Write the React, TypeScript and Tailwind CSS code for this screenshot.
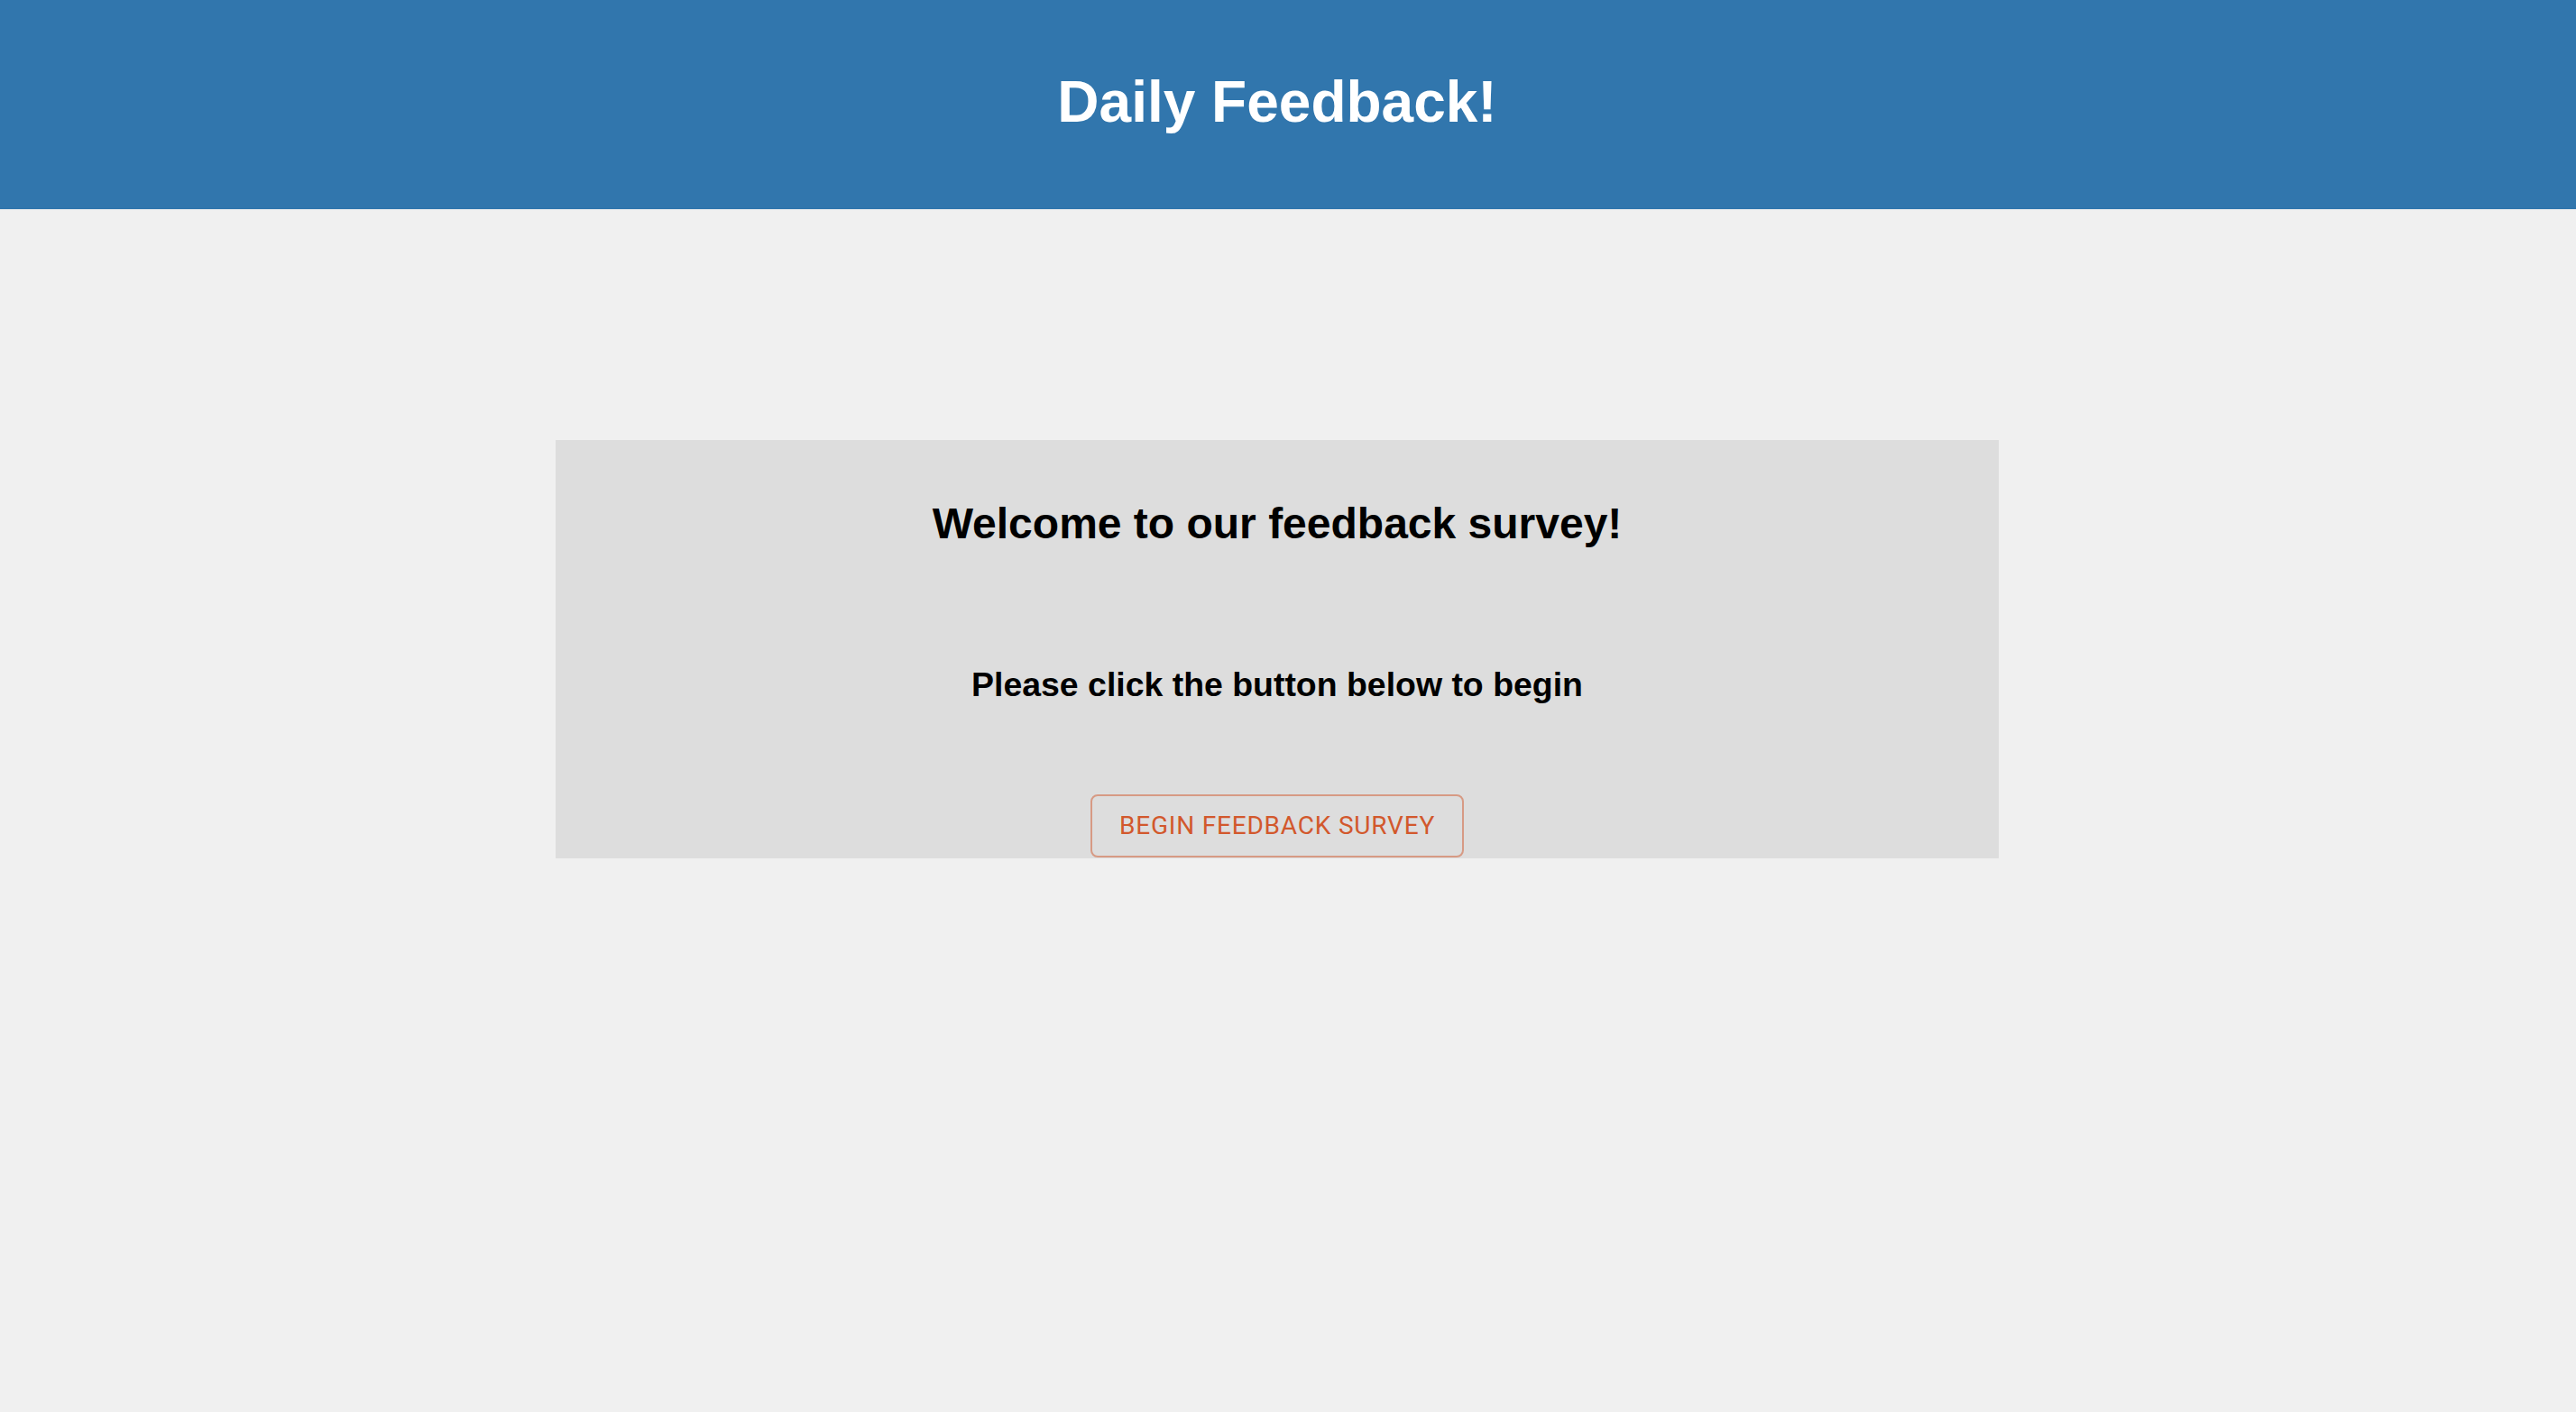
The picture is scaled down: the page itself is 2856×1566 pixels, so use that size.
export default function App() {
  return (
    <div className="min-h-[1566px] bg-[#f0f0f0] font-['Liberation_Sans',Arial,sans-serif]">
      <header className="h-[232px] w-full bg-[#3176ad] pr-[24px]">
        <h1 className="pt-[81px] text-center text-[64px] font-bold leading-none text-white">
          Daily Feedback!
        </h1>
      </header>

      <main className="flex justify-center pr-[24px] pt-[256px]">
        <section className="flex h-[464px] w-[1600px] flex-col items-center bg-[#dddddd] pt-[69px]">
          <h2 className="text-[48px] font-bold leading-none text-black">
            Welcome to our feedback survey!
          </h2>
          <h3 className="mt-[136px] text-[37.44px] font-bold leading-none text-black">
            Please click the button below to begin
          </h3>
          <button className="mt-[103px] flex h-[70px] items-center rounded-[8px] border-2 border-[#d2582c80] px-[30px] font-['Roboto',sans-serif] text-[28px] uppercase tracking-[0.8px] text-[#d2582c]">
            Begin Feedback Survey
          </button>
        </section>
      </main>
    </div>
  );
}
